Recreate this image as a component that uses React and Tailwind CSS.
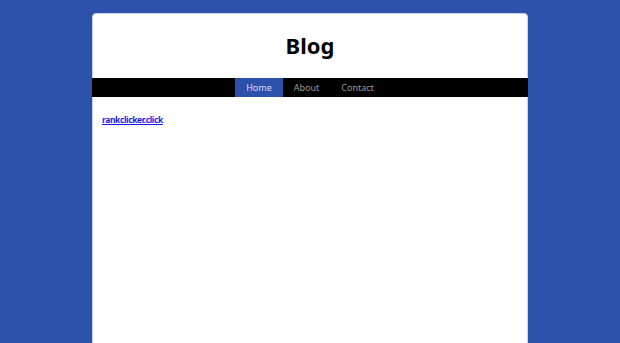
export default function App() {
  const links = ['Home', 'About', 'Contact']

  return (
    <div className="h-[343px] overflow-hidden bg-[#2c51ab] pt-[13px] font-['Noto_Sans',sans-serif]">
      <div className="mx-auto w-[436px] h-[400px] bg-white rounded-[4px] border border-[#c9cfe0]">
        {/* Header */}
        <div className="h-[64px] flex items-center justify-center pb-[3px]">
          <h1 className="text-[22px] font-bold text-black leading-none">Blog</h1>
        </div>

        {/* Nav */}
        <nav className="-mx-px h-[19px] bg-black flex justify-center">
          {links.map((l, i) => (
            <a
              key={l}
              href="#"
              className={`px-[11px] flex items-center text-[9px] ${
                i === 0 ? 'bg-[#2c51ab] text-[#d8def0]' : 'text-[#9a9a9a]'
              }`}
            >
              {l}
            </a>
          ))}
        </nav>

        {/* Content */}
        <div className="px-[9px] pt-[8px]">
          <a href="#" className="text-[8.5px] tracking-[-0.4px] font-bold text-[#1a1aee] underline">
            rankclicker.click
          </a>
        </div>
      </div>
    </div>
  )
}
